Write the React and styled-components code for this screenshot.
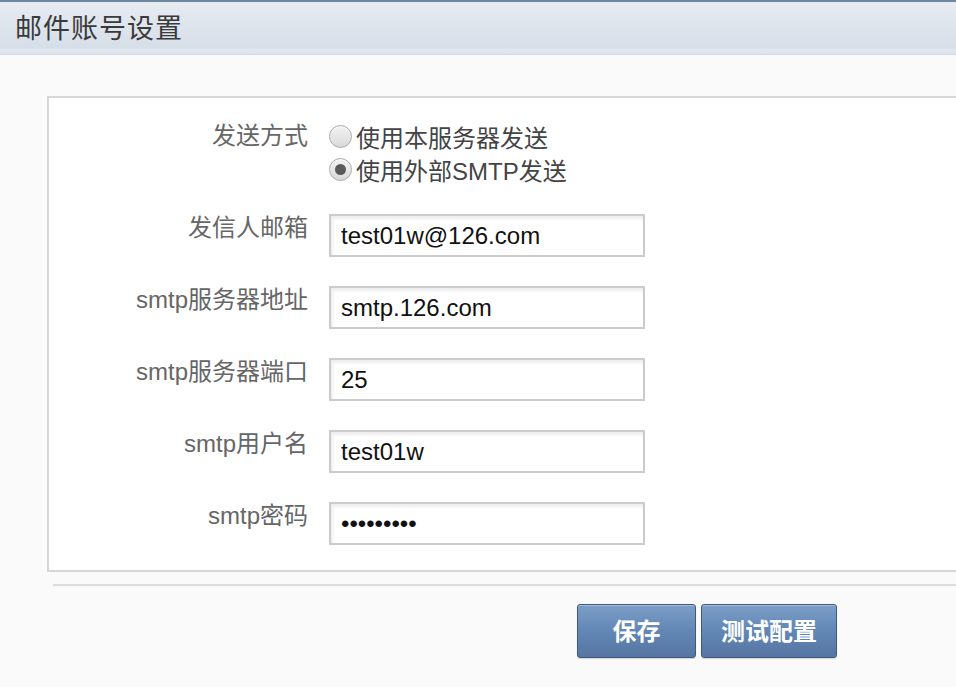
import React from 'react';
import styled, { createGlobalStyle } from 'styled-components';

const GlobalStyle = createGlobalStyle`
	html, body {
		margin: 0;
		padding: 0;
		background: #fafafa;
		overflow: hidden;
	}
	* {
		box-sizing: border-box;
	}
`;

const cjk = `"Liberation Sans", "Noto Sans CJK SC", sans-serif`;

export const Page = styled.div`
	width: 956px;
	height: 687px;
	overflow: hidden;
	font-family: ${cjk};
`;

export const Header = styled.div`
	height: 55px;
	border-top: 2px solid #71869f;
	background: linear-gradient(#e7ecf2, #d6dee8 88%, #e2e7ee 92%, #dce2ea);
	border-bottom: 1px solid #d3dae4;
	padding-left: 15px;
	display: flex;
	align-items: center;
`;

export const Title = styled.h1`
	margin: 0 0 3px;
	font-size: 27px;
	font-weight: 400;
	letter-spacing: 1px;
	color: #3a3a3a;
	font-family: "Noto Sans CJK SC", serif;
`;

export const Panel = styled.div`
	margin: 41px -40px 0 47px;
	border: 2px solid #d6d6d6;
	background: #fff;
	padding: 22px 0 25px;
`;

export const Row = styled.div`
	display: flex;
	align-items: flex-start;
	margin-bottom: ${p => p.$gap || 29}px;
	&:last-child {
		margin-bottom: 0;
	}
`;

export const Label = styled.div`
	width: 259px;
	margin-right: 21px;
	text-align: right;
	font-size: 24px;
	line-height: 28px;
	padding-top: ${p => p.$top || 0}px;
	color: #666;
	white-space: nowrap;
`;

export const RadioGroup = styled.div`
	display: flex;
	flex-direction: column;
`;

export const RadioLine = styled.label`
	display: flex;
	align-items: center;
	height: 33px;
	font-size: 24px;
	color: #444;
	white-space: nowrap;
`;

export const Radio = styled.input.attrs({ type: 'radio' })`
	appearance: none;
	margin: 0 4px 0 0;
	width: 23px;
	height: 23px;
	border-radius: 50%;
	border: 1px solid #a9a9a9;
	background: linear-gradient(#f3f3f3, #d9d9d9);
	box-shadow: inset 0 1px 1px rgba(255, 255, 255, 0.8);
	display: grid;
	place-items: center;
	&:checked::after {
		content: '';
		width: 11px;
		height: 11px;
		border-radius: 50%;
		background: #5a5a5a;
	}
`;

export const TextInput = styled.input`
	width: 316px;
	height: 43px;
	border: 2px solid #cbcbcb;
	box-shadow: inset 2px 3px 3px rgba(0, 0, 0, 0.07);
	padding: 0 10px;
	font-family: "Liberation Sans", sans-serif;
	font-size: 24px;
	color: #111;
	background: #fff;
	outline: none;
`;

export const Divider = styled.div`
	margin: 12px 0 0 53px;
	height: 2px;
	background: #dcdcdc;
`;

export const Actions = styled.div`
	display: flex;
	gap: 5px;
	padding: 18px 0 0 577px;
`;

export const Button = styled.button`
	min-width: 119px;
	height: 54px;
	padding: 0 19px 4px;
	border: 1px solid #405a7e;
	border-radius: 3px;
	background: linear-gradient(#7c9ec7, #6489b7 45%, #5675a2);
	box-shadow: inset 0 1px 0 rgba(255, 255, 255, 0.3), 0 1px 1px rgba(0, 0, 0, 0.15);
	color: #fff;
	font-family: "Noto Sans CJK SC", serif;
	font-size: 24px;
	font-weight: 700;
	cursor: pointer;
`;

const fields = [
	{ label: '发信人邮箱', value: 'test01w@126.com' },
	{ label: 'smtp服务器地址', value: 'smtp.126.com' },
	{ label: 'smtp服务器端口', value: '25' },
	{ label: 'smtp用户名', value: 'test01w' },
	{ label: 'smtp密码', value: 'password1', type: 'password' }
];

class App extends React.Component {
	state = {
		mode: 'smtp'
	};
	render() {
		const { mode } = this.state;
		return (
			<Page>
				<GlobalStyle />
				<Header>
					<Title>邮件账号设置</Title>
				</Header>
				<Panel>
					<Row $gap={28}>
						<Label $top={2}>发送方式</Label>
						<RadioGroup>
							<RadioLine>
								<Radio
									name='mode'
									checked={mode === 'local'}
									onChange={() => this.setState({ mode: 'local' })}
								/>
								使用本服务器发送
							</RadioLine>
							<RadioLine>
								<Radio
									name='mode'
									checked={mode === 'smtp'}
									onChange={() => this.setState({ mode: 'smtp' })}
								/>
								使用外部SMTP发送
							</RadioLine>
						</RadioGroup>
					</Row>
					{fields.map(f => (
						<Row key={f.label}>
							<Label>{f.label}</Label>
							<TextInput type={f.type || 'text'} defaultValue={f.value} />
						</Row>
					))}
				</Panel>
				<Divider />
				<Actions>
					<Button>保存</Button>
					<Button>测试配置</Button>
				</Actions>
			</Page>
		);
	}
}

export default App;
